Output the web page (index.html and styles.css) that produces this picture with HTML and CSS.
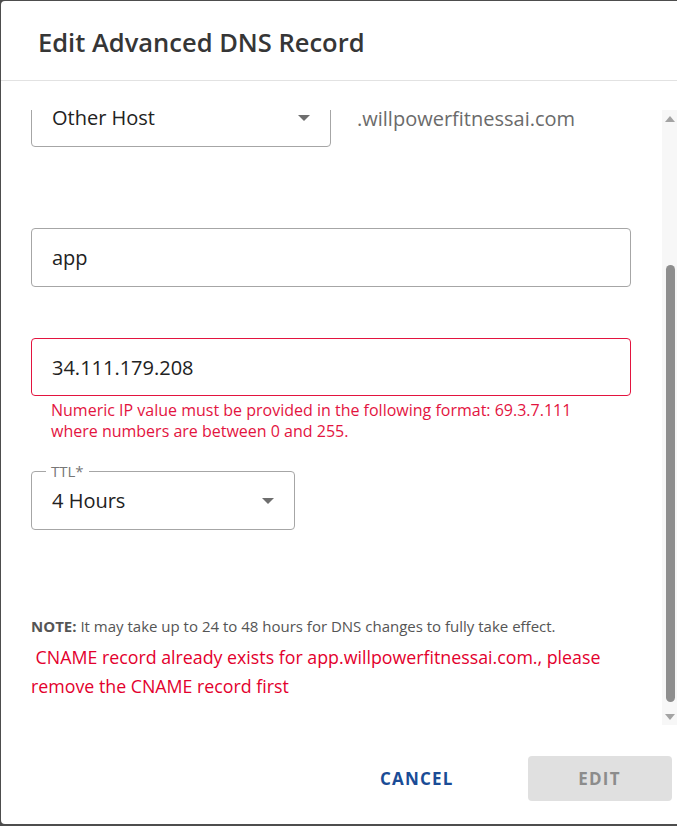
FILE: index.html
```html
<!DOCTYPE html>
<html lang="en">
<head>
<meta charset="utf-8">
<title>Edit Advanced DNS Record</title>
<link rel="stylesheet" href="styles.css">
</head>
<body>
<div class="modal">
  <div class="header"><h1 class="title">Edit Advanced DNS Record</h1></div>
  <div class="body">
    <div class="scroll-view">
      <div class="content">
        <div class="host-row">
          <div class="field select host-select">
            <span class="value">Other Host</span>
            <span class="caret"></span>
          </div>
          <span class="domain">.willpowerfitnessai.com</span>
        </div>
        <div class="field input name-input"><span class="value">app</span></div>
        <div class="field input ip-input error"><span class="value">34.111.179.208</span></div>
        <p class="field-error">Numeric IP value must be provided in the following format: 69.3.7.111<br>where numbers are between 0 and 255.</p>
        <div class="field select ttl-select">
          <span class="legend">TTL*</span>
          <span class="value">4 Hours</span>
          <span class="caret"></span>
        </div>
        <p class="note"><b>NOTE:</b> It may take up to 24 to 48 hours for DNS changes to fully take effect.</p>
        <p class="form-error">&nbsp;CNAME record already exists for app.willpowerfitnessai.com., please<br>remove the CNAME record first</p>
      </div>
    </div>
    <div class="scrollbar">
      <span class="sb-arrow up"></span>
      <div class="sb-track"><div class="sb-thumb"></div></div>
      <span class="sb-arrow down"></span>
    </div>
  </div>
  <div class="footer">
    <button class="btn btn-text">CANCEL</button>
    <button class="btn btn-disabled">EDIT</button>
  </div>
</div>
</body>
</html>
```
FILE: styles.css
```css
* { box-sizing: border-box; }
html, body { margin: 0; padding: 0; }
body {
  width: 677px;
  height: 826px;
  overflow: hidden;
  background: #4d4d4d;
  font-family: "Open Sans", "Noto Sans", sans-serif;
  color: #333;
}
.modal {
  margin: 1px 0 0 1px;
  width: 690px;
  height: 823px;
  background: #fff;
  border-radius: 4px 0 0 4px;
  display: flex;
  flex-direction: column;
}
.header {
  height: 80px;
  flex: none;
  display: flex;
  align-items: center;
  padding-left: 37px;
  padding-top: 2px;
  border-bottom: 1px solid #e2e2e2;
}
.title {
  margin: 0;
  font-size: 25.5px;
  font-weight: 600;
  color: #363636;
  letter-spacing: 0;
}
.body {
  margin-top: 29px;
  height: 615px;
  flex: none;
  display: flex;
  width: 676px;
}
.scroll-view {
  flex: 1;
  overflow: hidden;
}
.content {
  margin-top: -21px;
  padding: 0 31px 0 30px;
}
.host-row {
  display: flex;
  align-items: flex-start;
}
.field {
  position: relative;
  border: 1px solid #a6a6a6;
  border-radius: 4px;
  display: flex;
  align-items: center;
  padding: 0 20px;
  font-size: 20px;
  color: #222;
}
.host-select {
  width: 300px;
  height: 58px;
  justify-content: space-between;
}
.host-select .value { margin-top: -2px; }
.caret {
  width: 0;
  height: 0;
  border-left: 6px solid transparent;
  border-right: 6px solid transparent;
  border-top: 6px solid #6e6e6e;
}
.domain {
  margin-left: 26px;
  margin-top: 16px;
  font-size: 20px;
  color: #6b6b6b;
}
.name-input {
  margin-top: 81px;
  height: 59px;
}
.ip-input {
  margin-top: 51px;
  height: 58px;
}
.field.error { border-color: #e3143f; }
.field-error {
  margin: 4px 0 0 20px;
  font-size: 16px;
  line-height: 21px;
  color: #e3143f;
}
.ttl-select {
  margin-top: 29px;
  width: 264px;
  height: 59px;
  justify-content: space-between;
}
.legend {
  position: absolute;
  top: -11px;
  left: 14px;
  padding: 0 5px;
  background: #fff;
  font-size: 15px;
  line-height: 20px;
  color: #777;
}
.note {
  margin: 86px 0 0 0;
  font-size: 15px;
  line-height: 20px;
  color: #555;
}
.note b { font-weight: 700; color: #555; }
.form-error {
  margin: 7px 0 0 0;
  font-size: 17.8px;
  line-height: 29px;
  color: #e3002d;
}
.scrollbar {
  width: 15px;
  flex: none;
  display: flex;
  flex-direction: column;
  align-items: center;
  background: #f7f7f7;
}
.sb-arrow {
  flex: none;
  height: 17px;
  width: 15px;
  display: flex;
  align-items: center;
  justify-content: center;
}
.sb-arrow::before {
  content: "";
  width: 0;
  height: 0;
  border-left: 5px solid transparent;
  border-right: 5px solid transparent;
}
.sb-arrow.up::before { border-bottom: 6px solid #a3a3a3; }
.sb-arrow.down::before { border-top: 6px solid #a3a3a3; }
.sb-track {
  flex: 1;
  width: 15px;
  display: flex;
  justify-content: center;
  padding-top: 138px;
  padding-bottom: 6px;
}
.sb-thumb {
  width: 9px;
  height: 437px;
  border-radius: 5px;
  background: #8e8e8e;
  margin-left: 2px;
}
.footer {
  flex: none;
  display: flex;
  align-items: center;
  padding-top: 31px;
  padding-left: 377px;
  gap: 72px;
}
.btn {
  font-family: "Open Sans", "Noto Sans", sans-serif;
  font-size: 17px;
  font-weight: 700;
  letter-spacing: 1.2px;
  border: none;
  background: transparent;
  cursor: pointer;
}
.btn-text {
  color: #1a4c96;
  padding: 0 2px;
}
.btn-disabled {
  width: 144px;
  height: 45px;
  border-radius: 4px;
  background: #e0e0e0;
  color: #8c8c8c;
}
```
